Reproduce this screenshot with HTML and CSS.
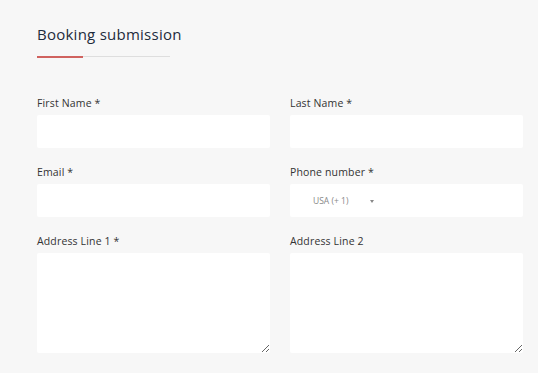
FILE: index.html
```html
<!DOCTYPE html>
<html>
<head>
<meta charset="utf-8">
<link rel="stylesheet" href="styles.css">
</head>
<body>
<div class="page">
  <h2 class="title">Booking submission</h2>
  <div class="rule"><span class="rule-accent"></span></div>
  <form class="grid">
    <div class="field">
      <label class="label">First Name *</label>
      <input class="input" type="text">
    </div>
    <div class="field">
      <label class="label">Last Name *</label>
      <input class="input" type="text">
    </div>
    <div class="field">
      <label class="label">Email *</label>
      <input class="input" type="text">
    </div>
    <div class="field">
      <label class="label">Phone number *</label>
      <div class="input phone">
        <span class="country">USA (+ 1)</span>
        <span class="caret"></span>
      </div>
    </div>
    <div class="field">
      <label class="label">Address Line 1 *</label>
      <textarea class="input area"></textarea>
    </div>
    <div class="field">
      <label class="label">Address Line 2</label>
      <textarea class="input area"></textarea>
    </div>
    <div class="field">
      <label class="label">City</label>
      <input class="input" type="text">
    </div>
    <div class="field">
      <label class="label">State/Province/Region</label>
      <input class="input" type="text">
    </div>
  </form>
</div>
</body>
</html>
```
FILE: styles.css
```css
html, body {
  margin: 0;
  padding: 0;
  background: #f7f7f7;
}
body {
  font-family: "Open Sans", "Liberation Sans", sans-serif;
  color: #333;
}
.page {
  padding: 24px 15px 0 37px;
}
.title {
  margin: 0;
  font-size: 15px;
  font-weight: 400;
  line-height: 20px;
  color: #1e2b3c;
  letter-spacing: 0.25px;
}
.rule {
  margin-top: 12px;
  width: 133px;
  height: 1px;
  background: #dedede;
  position: relative;
}
.rule-accent {
  position: absolute;
  left: 0;
  top: 0;
  width: 46px;
  height: 2px;
  background: #d0625f;
}
.grid {
  margin-top: 39px;
  display: grid;
  grid-template-columns: 1fr 1fr;
  column-gap: 20px;
  row-gap: 17px;
}
.field {
  display: flex;
  flex-direction: column;
}
.label {
  font-size: 10.5px;
  line-height: 14px;
  color: #333;
  margin-bottom: 5px;
  letter-spacing: 0.15px;
}
.input {
  box-sizing: border-box;
  height: 33px;
  width: 100%;
  border: none;
  border-radius: 2px;
  background: #fff;
  outline: none;
  margin: 0;
  font-family: inherit;
}
.area {
  height: 100px;
  resize: both;
  display: block;
}
.phone {
  display: flex;
  align-items: center;
  padding-left: 23px;
}
.country {
  font-size: 8.5px;
  color: #888;
}
.caret {
  margin-left: 22px;
  margin-top: 2px;
  width: 0;
  height: 0;
  border-left: 2.5px solid transparent;
  border-right: 2.5px solid transparent;
  border-top: 3px solid #888;
}
```
